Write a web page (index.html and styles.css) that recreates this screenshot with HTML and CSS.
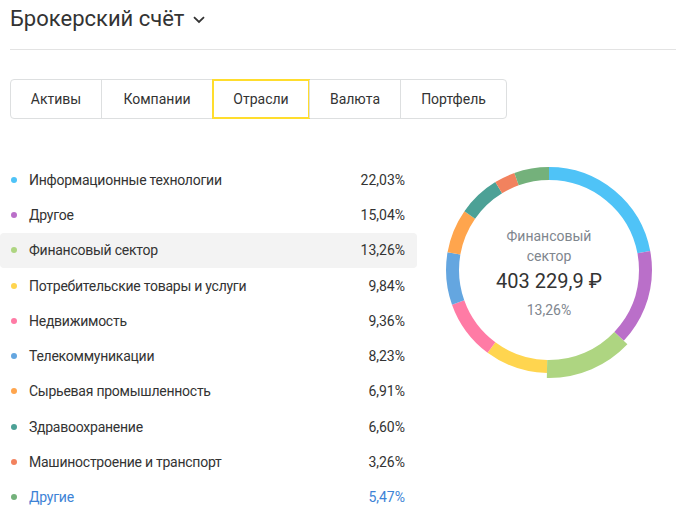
FILE: index.html
```html
<!DOCTYPE html>
<html lang="ru">
<head>
<meta charset="utf-8">
<title>Брокерский счёт</title>
<link rel="stylesheet" href="styles.css">
</head>
<body>
<header class="header">
  <h1 class="title">Брокерский счёт
    <svg class="chevron" width="12" height="8" viewBox="0 0 12 8"><path d="M1 1.2 L6 6 L11 1.2" fill="none" stroke="#333" stroke-width="1.8"/></svg>
  </h1>
</header>
<nav class="tabs">
  <div class="tab">Активы</div>
  <div class="tab">Компании</div>
  <div class="tab active">Отрасли</div>
  <div class="tab">Валюта</div>
  <div class="tab">Портфель</div>
</nav>
<main class="main">
  <ul class="list">
    <li class="row"><span class="dot" style="background:#4fc3f7"></span><span class="name">Информационные технологии</span><span class="pct">22,03%</span></li>
    <li class="row"><span class="dot" style="background:#ba6fc9"></span><span class="name">Другое</span><span class="pct">15,04%</span></li>
    <li class="row selected"><span class="dot" style="background:#aed581"></span><span class="name">Финансовый сектор</span><span class="pct">13,26%</span></li>
    <li class="row"><span class="dot" style="background:#ffd54f"></span><span class="name">Потребительские товары и услуги</span><span class="pct">9,84%</span></li>
    <li class="row"><span class="dot" style="background:#ff7ba5"></span><span class="name">Недвижимость</span><span class="pct">9,36%</span></li>
    <li class="row"><span class="dot" style="background:#64a6e0"></span><span class="name">Телекоммуникации</span><span class="pct">8,23%</span></li>
    <li class="row"><span class="dot" style="background:#ffa54d"></span><span class="name">Сырьевая промышленность</span><span class="pct">6,91%</span></li>
    <li class="row"><span class="dot" style="background:#4ca196"></span><span class="name">Здравоохранение</span><span class="pct">6,60%</span></li>
    <li class="row"><span class="dot" style="background:#f2825e"></span><span class="name">Машиностроение и транспорт</span><span class="pct">3,26%</span></li>
    <li class="row link"><span class="dot" style="background:#74b17b"></span><span class="name">Другие</span><span class="pct">5,47%</span></li>
  </ul>
  <div class="chart">
    <svg class="donut" width="230" height="230" viewBox="0 0 230 230">
      <g transform="rotate(-90 115 115)" fill="none">
        <circle cx="115" cy="115" r="96.5" pathLength="100" stroke="#4fc3f7" stroke-width="13" stroke-dasharray="22.03 77.97" stroke-dashoffset="0"/>
        <circle cx="115" cy="115" r="96.5" pathLength="100" stroke="#ba6fc9" stroke-width="13" stroke-dasharray="15.04 84.96" stroke-dashoffset="-22.03"/>
        <circle cx="115" cy="115" r="96.5" pathLength="100" stroke="#ffd54f" stroke-width="13" stroke-dasharray="9.84 90.16" stroke-dashoffset="-50.33"/>
        <circle cx="115" cy="115" r="96.5" pathLength="100" stroke="#ff7ba5" stroke-width="13" stroke-dasharray="9.36 90.64" stroke-dashoffset="-60.17"/>
        <circle cx="115" cy="115" r="96.5" pathLength="100" stroke="#64a6e0" stroke-width="13" stroke-dasharray="8.23 91.77" stroke-dashoffset="-69.53"/>
        <circle cx="115" cy="115" r="96.5" pathLength="100" stroke="#ffa54d" stroke-width="13" stroke-dasharray="6.91 93.09" stroke-dashoffset="-77.76"/>
        <circle cx="115" cy="115" r="96.5" pathLength="100" stroke="#4ca196" stroke-width="13" stroke-dasharray="6.60 93.40" stroke-dashoffset="-84.67"/>
        <circle cx="115" cy="115" r="96.5" pathLength="100" stroke="#f2825e" stroke-width="13" stroke-dasharray="3.26 96.74" stroke-dashoffset="-91.27"/>
        <circle cx="115" cy="115" r="96.5" pathLength="100" stroke="#74b17b" stroke-width="13" stroke-dasharray="5.47 94.53" stroke-dashoffset="-94.53"/>
        <circle cx="115" cy="115" r="99" pathLength="100" stroke="#aed581" stroke-width="18" stroke-dasharray="13.26 86.74" stroke-dashoffset="-37.07"/>
      </g>
    </svg>
    <div class="center">
      <div class="c-name">Финансовый<br>сектор</div>
      <div class="c-value">403 229,9 ₽</div>
      <div class="c-pct">13,26%</div>
    </div>
  </div>
</main>
</body>
</html>
```
FILE: styles.css
```css
* { box-sizing: border-box; }
html, body { margin: 0; padding: 0; background: #fff; }
body {
  font-family: Roboto, "Noto Sans", "Liberation Sans", sans-serif;
  color: #333;
  width: 676px;
  overflow: hidden;
}
.header {
  margin-left: 10px;
  border-bottom: 1px solid #e3e3e3;
  height: 50px;
}
.title {
  margin: 0;
  padding-top: 5px;
  font-size: 22px;
  font-weight: 400;
  line-height: 28px;
  display: flex;
  align-items: center;
  gap: 9px;
}
.chevron { margin-top: 2px; }
.tabs {
  display: flex;
  margin: 29px 0 0 10px;
  width: 497px;
  height: 40px;
  border: 1px solid #dddfe0;
  border-radius: 4px;
}
.tab {
  position: relative;
  display: flex;
  align-items: center;
  justify-content: center;
  font-size: 14px;
  color: #333;
  border-left: 1px solid #dddfe0;
}
.tab:first-child { border-left: 0; width: 90px; }
.tab:nth-child(2) { width: 111px; }
.tab:nth-child(3) { width: 97px; }
.tab:nth-child(4) { width: 91px; }
.tab:nth-child(5) { flex: 1; }
.tab.active::after {
  content: "";
  position: absolute;
  top: -1px; bottom: -1px; left: -1px; right: -1px;
  border: 2px solid #ffdd2d;
}
.main {
  display: flex;
  margin-top: 36px;
}
.list {
  list-style: none;
  margin: 0;
  padding: 7px 0 0 0;
  width: 417px;
}
.row {
  display: flex;
  align-items: center;
  height: 35.3px;
  padding: 0 12px 0 11px;
  font-size: 14px;
  border-radius: 4px;
}
.row.selected { background: #f3f3f3; }
.dot {
  width: 6px;
  height: 6px;
  border-radius: 50%;
  flex: none;
}
.name { margin-left: 12px; flex: 1; letter-spacing: -0.25px; }
.pct { text-align: right; }
.row.link { color: #3d83d6; }
.chart {
  position: relative;
  width: 230px;
  height: 230px;
  margin-left: 17px;
}
.donut { display: block; }
.center {
  position: absolute;
  left: 0; right: 0; top: 71px;
  text-align: center;
}
.c-name {
  font-size: 14px;
  line-height: 20px;
  color: #80868e;
}
.c-value {
  font-size: 20px;
  line-height: 24px;
  margin-top: 3px;
  color: #333;
}
.c-pct {
  font-size: 14px;
  line-height: 18px;
  margin-top: 8px;
  color: #80868e;
}
```
